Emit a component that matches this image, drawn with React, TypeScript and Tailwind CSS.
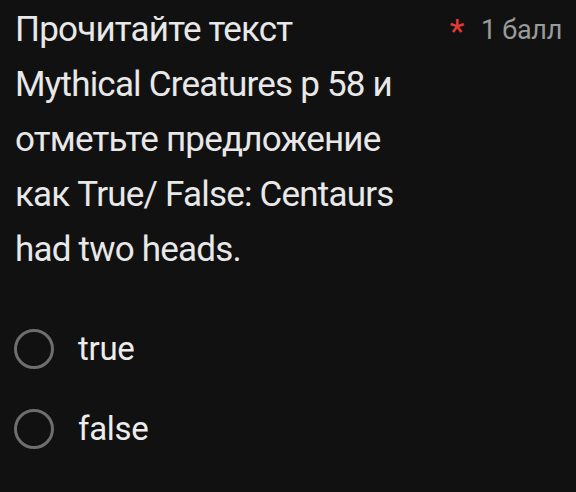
export default function App() {
  return (
    <div className="h-[492px] w-[576px] overflow-hidden bg-[#111111] font-['Roboto',sans-serif]">
      <div className="flex items-start pl-[15px] pr-[14px] pt-[2px]">
        <div className="w-[420px] text-[35px] leading-[55px] tracking-[-0.8px] text-[#e8e8e8]">
          Прочитайте текст
          <br />
          Mythical Creatures p 58 и
          <br />
          отметьте предложение
          <br />
          как True/ False: Centaurs
          <br />
          had two heads.
        </div>
        <div className="ml-auto flex items-start gap-[17px] pt-[12px] text-[27px] leading-[32px] tracking-[-0.3px] text-[#9a9a9a]">
          <span className="pt-[2px] text-[34px] leading-[30px] text-[#e53935]">*</span>
          <span>1 балл</span>
        </div>
      </div>
      <div className="mt-[52px] flex flex-col gap-[40px] pl-[14px]">
        <Option label="true" />
        <Option label="false" />
      </div>
    </div>
  );
}

function Option({ label }: { label: string }) {
  return (
    <label className="flex h-[40px] items-center gap-[24px]">
      <span className="size-[40px] rounded-full border-[3px] border-[#6e6e6e]" />
      <span className="text-[33px] leading-[40px] tracking-[-0.3px] text-[#ececec]">{label}</span>
    </label>
  );
}
